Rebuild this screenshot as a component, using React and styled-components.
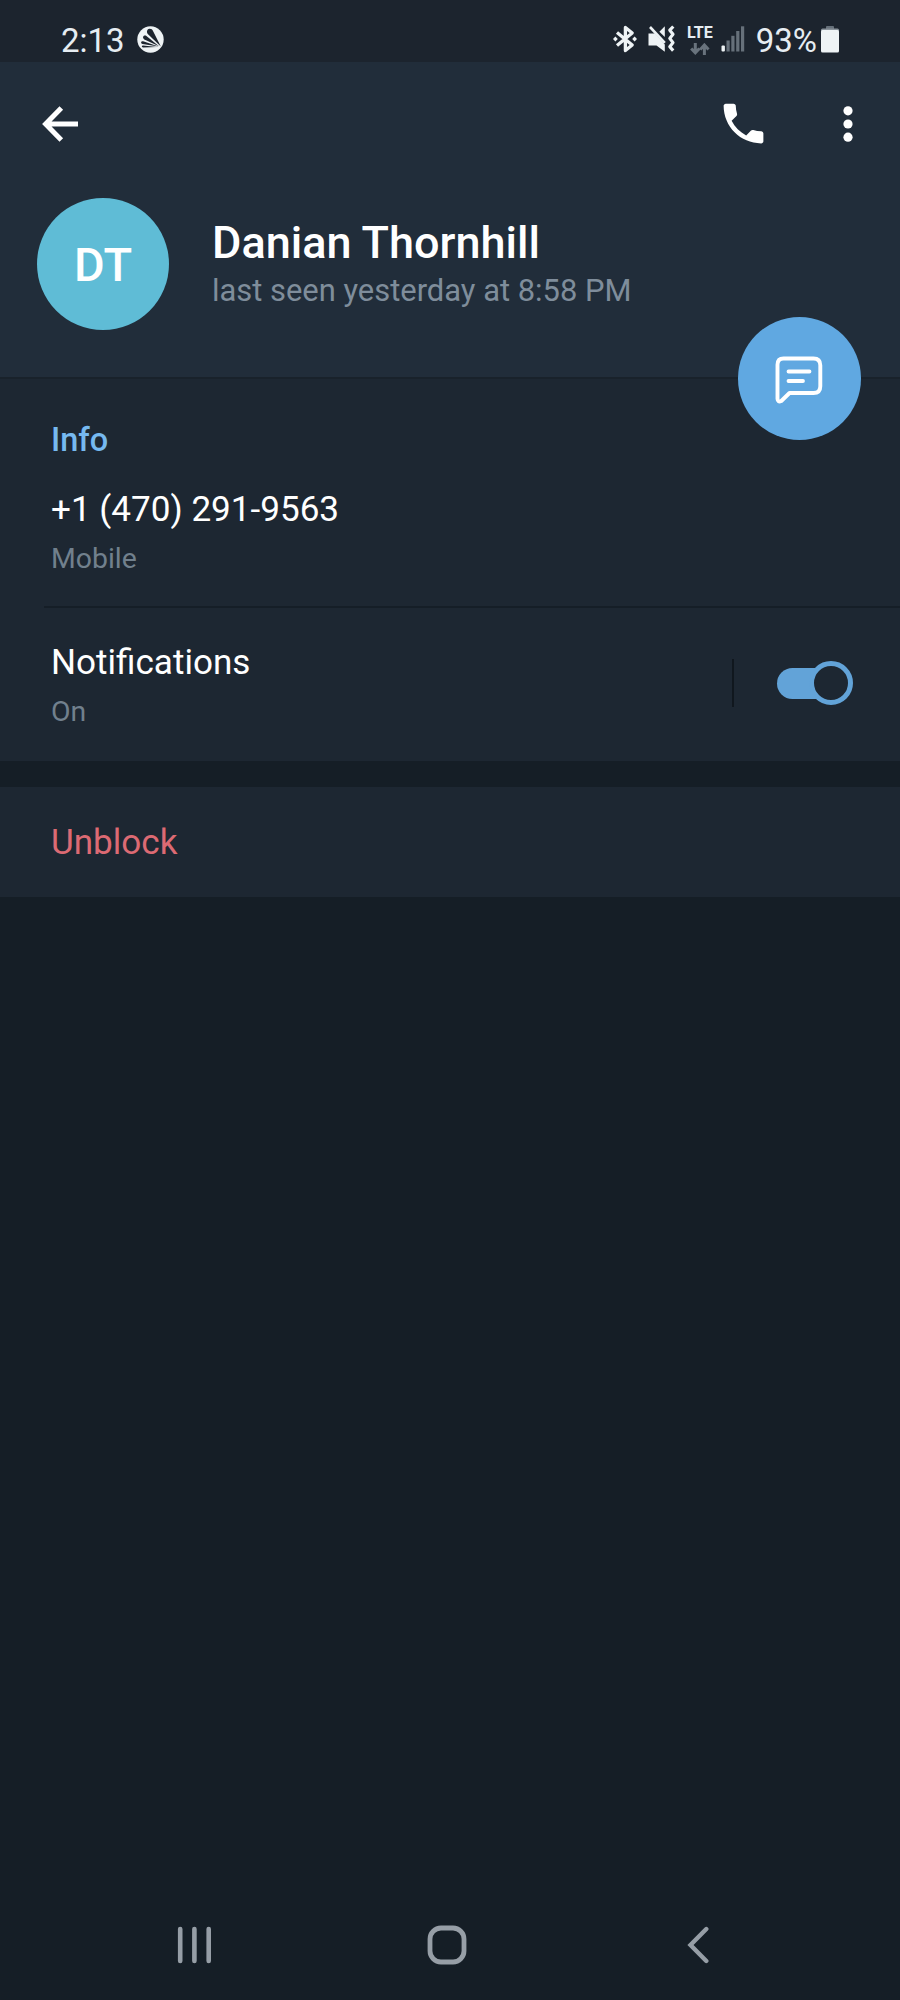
import React, { useState } from "react";
import styled, { createGlobalStyle } from "styled-components";

const headerColor = "#212d3a";
const panelColor = "#1d2732";
const backColor = "#151e26";
const accentColor = "#62a3d8";
const mutedColor = "#71808d";

const GlobalStyle = createGlobalStyle`
  body {
    margin: 0;
    background-color: ${backColor};
  }

  * {
    box-sizing: border-box;
  }
`;

function AppBadgeIcon() {
  return (
    <svg width="27" height="27" viewBox="0 0 27 27">
      <circle cx="13.5" cy="13.5" r="13.2" fill="#eef3f5" />
      <g fill="#1c242e">
        <path d="M23.8 20.6 L10.8 8 C9.2 6 10 3 12.6 2.8 C14.2 2.7 15.4 3.5 16 5 Z" />
        <path d="M22 20.2 L7.4 13.4 C5 12 6 8.8 8.8 9.6 Z" />
        <path d="M21.5 20.6 L5.6 18 C3.4 17.4 3.8 14.8 6.2 15.2 Z" />
        <path d="M20 21 L6 21.4 C4.4 21.3 4.4 19.7 6 19.6 Z" />
      </g>
    </svg>
  );
}

function BluetoothIcon() {
  return (
    <svg width="24" height="28" viewBox="0 0 24 28">
      <path
        d="M4 7.5 L19.2 20 L12.4 25.6 V2.4 L19.2 8 L4 20.5"
        fill="none"
        stroke="#eef3f5"
        strokeWidth="3.3"
        strokeLinejoin="round"
      />
      <path
        d="M0 14 L2.4 11.4 L4.8 14 L2.4 16.6 Z M19.2 14 L21.6 11.4 L24 14 L21.6 16.6 Z"
        fill="#eef3f5"
      />
    </svg>
  );
}

function VibrateIcon() {
  return (
    <svg width="28" height="28" viewBox="0 0 28 28">
      <path d="M0.5 8.5 H7 L16.8 19.5 V26.8 L8.5 20.5 H0.5 Z" fill="#eef3f5" />
      <path d="M11.4 6.8 L16.8 1.2 V12 Z" fill="#eef3f5" />
      <path d="M2 2 L16.8 17.8" stroke="#eef3f5" strokeWidth="2.6" />
      <path
        d="M25.3 1.5 L21.8 5.2 L25 9.2 L21.8 13.4 L25 17.6 L21.8 21.8 L25.2 25.6"
        fill="none"
        stroke="#eef3f5"
        strokeWidth="3.2"
        strokeLinejoin="round"
      />
    </svg>
  );
}

function DataArrowsIcon() {
  return (
    <svg width="20" height="12" viewBox="0 0 20 12">
      <path
        d="M5.3 0 V9.5 M1.2 5.4 L5.3 9.8 L9.4 5.4 M14.4 12 V2 M10.3 6.4 L14.4 2 L18.5 6.4"
        fill="none"
        stroke="#69737d"
        strokeWidth="3"
      />
    </svg>
  );
}

function SignalIcon() {
  return (
    <svg width="24" height="26" viewBox="0 0 24 26">
      <rect x="0.5" y="19.5" width="3.4" height="6" rx="1" fill="#eef3f5" />
      <g fill="#66707a">
        <rect x="5.5" y="14.5" width="3.2" height="11" />
        <rect x="10.3" y="9.8" width="3.2" height="15.7" />
        <rect x="15.2" y="5" width="3.2" height="20.5" />
        <rect x="20" y="0.3" width="3.2" height="25.2" />
      </g>
    </svg>
  );
}

function BatteryIcon() {
  return (
    <svg width="18" height="27" viewBox="0 0 18 27">
      <rect x="5" y="0" width="8" height="4" rx="1" fill="#66707a" />
      <rect x="0" y="2.5" width="18" height="4" rx="1.5" fill="#89929a" />
      <rect x="0" y="4" width="18" height="22.5" rx="1.5" fill="#eef3f5" />
    </svg>
  );
}

function BackArrowIcon() {
  return (
    <svg width="38" height="38" viewBox="0 0 38 38">
      <path
        d="M36 19 H4.5 M19.3 2.9 L3.6 19 L19.3 35.1"
        fill="none"
        stroke="#fff"
        strokeWidth="5"
      />
    </svg>
  );
}

function CallIcon() {
  return (
    <svg width="53" height="53" viewBox="0 0 24 24">
      <path
        fill="#fff"
        d="M6.62 10.79c1.44 2.83 3.76 5.14 6.59 6.59l2.2-2.2c.27-.27.67-.36 1.02-.24 1.12.37 2.33.57 3.57.57.55 0 1 .45 1 1V20c0 .55-.45 1-1 1-9.39 0-17-7.61-17-17 0-.55.45-1 1-1h3.5c.55 0 1 .45 1 1 0 1.25.2 2.45.57 3.57.11.35.03.74-.25 1.02l-2.2 2.2z"
      />
    </svg>
  );
}

function MoreIcon() {
  return (
    <svg width="10" height="38" viewBox="0 0 10 38">
      <g fill="#fff">
        <circle cx="5" cy="5.8" r="4.6" />
        <circle cx="5" cy="19" r="4.6" />
        <circle cx="5" cy="32.2" r="4.6" />
      </g>
    </svg>
  );
}

function MessageIcon() {
  return (
    <svg width="50" height="50" viewBox="0 0 50 50" fill="none" stroke="#fff">
      <path
        d="M8.5 4.5 H38.5 Q45.3 4.5 45.3 11.3 V32.2 Q45.3 39 38.5 39 H14.5 L6.3 47 Q2.7 48.6 2.5 45 V10.8 Q2.5 4.5 8.5 4.5 Z"
        strokeWidth="3.9"
        strokeLinejoin="round"
      />
      <path d="M13.5 17.5 H34.5 M13.5 27 H28" strokeWidth="3.8" strokeLinecap="round" />
    </svg>
  );
}

function App() {
  const [enabled, setEnabled] = useState(true);

  return (
    <Screen>
      <GlobalStyle />
      <StatusBar>
        <StatusText>2:13</StatusText>
        <AppBadgeIcon />
        <StatusRight>
          <BluetoothIcon />
          <VibrateIcon />
          <Network>
            <span>LTE</span>
            <DataArrowsIcon />
          </Network>
          <SignalIcon />
          <BatteryLevel>93%</BatteryLevel>
          <BatteryIcon />
        </StatusRight>
      </StatusBar>

      <Header>
        <Toolbar>
          <IconButton aria-label="Back">
            <BackArrowIcon />
          </IconButton>
          <ToolbarActions>
            <IconButton aria-label="Call">
              <CallIcon />
            </IconButton>
            <IconButton aria-label="More">
              <MoreIcon />
            </IconButton>
          </ToolbarActions>
        </Toolbar>
        <Profile>
          <Avatar>DT</Avatar>
          <div>
            <Name>Danian Thornhill</Name>
            <LastSeen>last seen yesterday at 8:58 PM</LastSeen>
          </div>
        </Profile>
        <MessageButton aria-label="Message">
          <MessageIcon />
        </MessageButton>
      </Header>

      <InfoSection>
        <SectionTitle>Info</SectionTitle>
        <RowTitle>+1 (470) 291-9563</RowTitle>
        <RowSubtitle>Mobile</RowSubtitle>
      </InfoSection>
      <Divider />
      <NotificationRow>
        <div>
          <RowTitle>Notifications</RowTitle>
          <RowSubtitle>On</RowSubtitle>
        </div>
        <SwitchArea>
          <Switch
            role="switch"
            aria-checked={enabled}
            aria-label="Notifications"
            onClick={() => setEnabled(!enabled)}
          >
            <Thumb $on={enabled} />
          </Switch>
        </SwitchArea>
      </NotificationRow>

      <UnblockRow>
        <RowTitle $danger>Unblock</RowTitle>
      </UnblockRow>

      <NavBar>
        <svg width="34" height="38" viewBox="0 0 34 38">
          <path
            d="M3.2 3 V35 M17.4 3 V35 M31.7 3 V35"
            stroke="#969ea6"
            strokeWidth="4.6"
            strokeLinecap="round"
          />
        </svg>
        <svg width="40" height="40" viewBox="0 0 40 40">
          <rect x="3" y="3" width="34" height="34" rx="11" fill="none" stroke="#969ea6" strokeWidth="4.8" />
        </svg>
        <svg width="24" height="38" viewBox="0 0 24 38">
          <path
            d="M20.3 3 L4.5 19 L20.3 35"
            fill="none"
            stroke="#969ea6"
            strokeWidth="4.4"
            strokeLinecap="round"
          />
        </svg>
      </NavBar>
    </Screen>
  );
}

export default App;

const Screen = styled.main`
  width: 900px;
  height: 2000px;
  display: flex;
  flex-direction: column;
  background-color: ${backColor};
  font-family: Roboto, "Liberation Sans", sans-serif;
  color: #fff;

  svg {
    display: block;
    flex-shrink: 0;
  }
`;

const StatusBar = styled.div`
  height: 62px;
  padding: 16px 61px 0 61px;
  display: flex;
  align-items: center;
  gap: 12px;
  background-color: #1c242e;
`;

const StatusText = styled.span`
  padding-top: 3px;
  font-size: 33px;
  line-height: 40px;
  color: #e6edf2;
`;

const BatteryLevel = styled(StatusText)`
  margin-right: -7px;
`;

const StatusRight = styled.div`
  margin-left: auto;
  display: flex;
  align-items: center;
  gap: 11px;
`;

const Network = styled.div`
  margin: 3px -3px 0 0;
  display: flex;
  flex-direction: column;
  align-items: center;
  gap: 3px;

  span {
    font-size: 16px;
    line-height: 14px;
    font-weight: 700;
    color: #e6edf2;
  }
`;

const Header = styled.header`
  position: relative;
  height: 317px;
  background-color: ${headerColor};
  border-bottom: 2px solid #19222b;
`;

const Toolbar = styled.div`
  height: 123px;
  padding: 0 47px 0 42px;
  display: flex;
  align-items: center;
  justify-content: space-between;
`;

const ToolbarActions = styled.div`
  display: flex;
  align-items: center;
  gap: 73px;
`;

const IconButton = styled.button`
  padding: 0;
  border: none;
  background: none;
  cursor: pointer;
`;

const Profile = styled.div`
  padding: 13px 37px 0;
  display: flex;
  align-items: center;
  gap: 43px;
`;

const Avatar = styled.div`
  width: 132px;
  height: 132px;
  border-radius: 50%;
  display: flex;
  align-items: center;
  justify-content: center;
  background-color: #5fbcd6;
  font-size: 47px;
  font-weight: 500;
`;

const Name = styled.h1`
  margin: 2px 0 0;
  font-size: 45px;
  line-height: 52px;
  font-weight: 500;
`;

const LastSeen = styled.div`
  font-size: 30.9px;
  line-height: 44px;
  color: #7f8d9b;
`;

const MessageButton = styled.button`
  position: absolute;
  right: 39px;
  bottom: -63px;
  width: 123px;
  height: 123px;
  padding: 0;
  border: none;
  border-radius: 50%;
  display: flex;
  align-items: center;
  justify-content: center;
  background-color: #60a8e1;
  cursor: pointer;
`;

const InfoSection = styled.section`
  height: 227px;
  padding: 37px 51px 0;
  background-color: ${panelColor};
`;

const SectionTitle = styled.h2`
  margin: 0 0 20px;
  font-size: 32.5px;
  line-height: 48px;
  font-weight: 500;
  color: #76b9f0;
`;

const RowTitle = styled.div`
  font-size: 35.1px;
  line-height: 50px;
  color: ${(props) => (props.$danger ? "#dc6a73" : "#fff")};
`;

const RowSubtitle = styled.div`
  margin-top: 5px;
  font-size: 28.4px;
  line-height: 40px;
  color: ${mutedColor};
`;

const Divider = styled.div`
  height: 2px;
  border-left: 44px solid ${panelColor};
  background-color: #151e27;
`;

const NotificationRow = styled.section`
  height: 153px;
  padding: 29px 47px 0 51px;
  display: flex;
  justify-content: space-between;
  background-color: ${panelColor};
`;

const SwitchArea = styled.div`
  height: 48px;
  margin-top: 22px;
  padding-left: 43px;
  display: flex;
  align-items: center;
  border-left: 2px solid #10171e;
`;

const Switch = styled.button`
  width: 76px;
  height: 44px;
  padding: 0;
  border: none;
  display: flex;
  align-items: center;
  background: none;
  cursor: pointer;

  &::before {
    content: "";
    width: 60px;
    height: 31px;
    border-radius: 16px;
    background-color: ${accentColor};
  }
`;

const Thumb = styled.span`
  width: 44px;
  height: 44px;
  margin-left: ${(props) => (props.$on ? "-28px" : "-60px")};
  border: 5px solid ${accentColor};
  border-radius: 50%;
  background-color: ${panelColor};
`;

const UnblockRow = styled.section`
  height: 110px;
  margin-top: 26px;
  padding: 30px 51px 0;
  background-color: ${panelColor};
`;

const NavBar = styled.nav`
  height: 110px;
  margin-top: auto;
  padding: 0 190px 0 177px;
  display: flex;
  align-items: center;
  justify-content: space-between;

  svg:nth-child(2) {
    margin-right: 4px;
  }
`;
